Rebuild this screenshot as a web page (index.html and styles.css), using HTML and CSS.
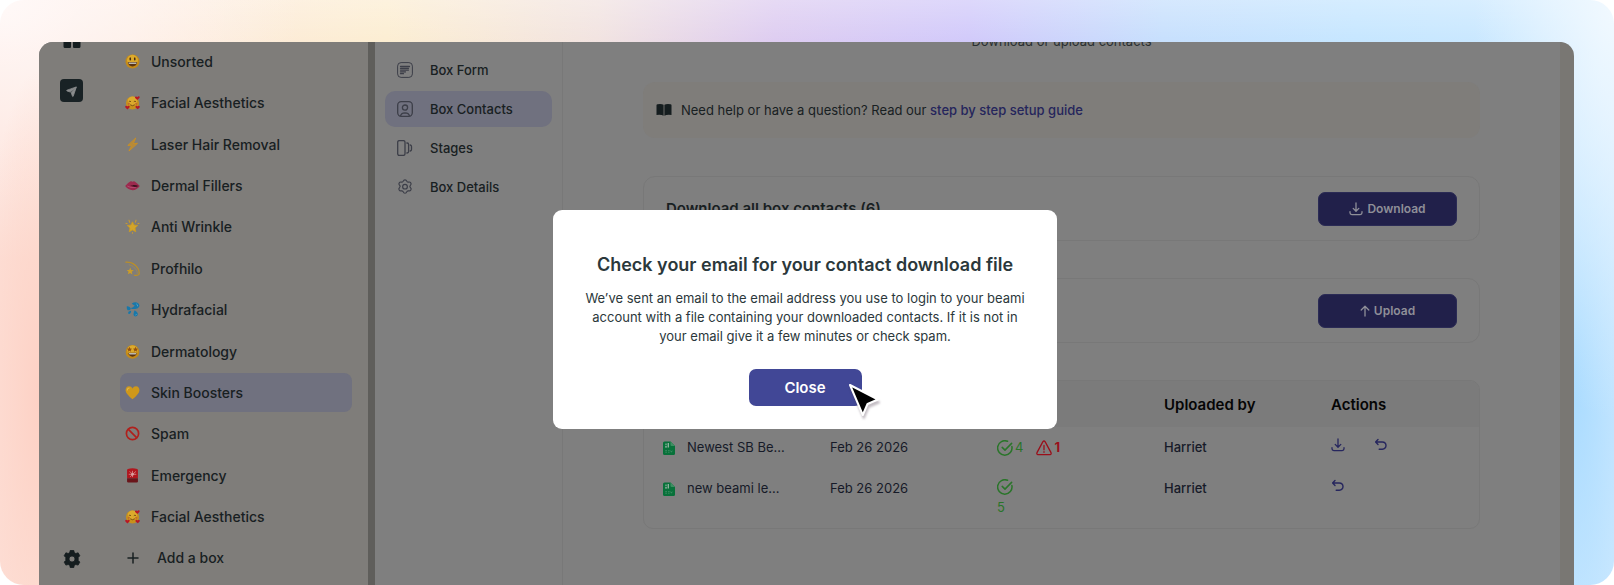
FILE: index.html
```
<!DOCTYPE html>
<html lang="en">
<head>
    <meta charset="utf-8">
    <title>Box Contacts</title>
    <link rel="stylesheet" href="styles.css">
</head>
<body>

<!-- shared icons -->
<svg class="sprite" aria-hidden="true">
    <symbol id="i-love" viewBox="0 0 16 16">
        <circle cx="8" cy="8.500" r="7" fill="#c8911c"/>
        <circle cx="8" cy="6.500" r="5" fill="#dcaa2c"/>
        <path d="M4 7.200q1.200-1.400 2.400 0M9.400 7.200q1.200-1.400 2.400 0M5.500 10.400q2.500 2 5 0" fill="none" stroke="#6b4212" stroke-width=".9"/>
        <circle cx="4" cy="9.400" r="1.200" fill="#c46a2a"/><circle cx="12" cy="9.400" r="1.200" fill="#c46a2a"/>
        <path d="M13.200 5.200l-2.400-2q-.6-1.600 1-1.700.9 0 1.400.8.500-1 1.500-.9 1.500.4.600 1.900zM2.600 15.400L.4 13.200q-.6-1.600.8-1.800.9 0 1.400.8.500-1 1.500-.8 1.400.4.600 1.900zM13.600 15.200l-2.300-2q-.4-1.500.9-1.700.8 0 1.400.8.500-.9 1.400-.7 1.200.4.600 1.700z" fill="#b81824"/>
    </symbol>
    <symbol id="i-download" viewBox="0 0 14 14">
        <path d="M7 1v8M4.200 6.400L7 9.200l2.800-2.800M1 9.600v1.200q0 1.800 1.800 1.800h8.400q1.800 0 1.800-1.800V9.600" fill="none" stroke="currentColor" stroke-width="1.300" stroke-linecap="round" stroke-linejoin="round"/>
    </symbol>
    <symbol id="i-undo" viewBox="0 0 14 14">
        <path d="M4 1.600L1.600 4 4 6.400M1.800 4h6.400q3.800.2 3.800 3.600T8.200 11.200H5.200" fill="none" stroke="currentColor" stroke-width="1.400" stroke-linecap="round" stroke-linejoin="round"/>
    </symbol>
    <symbol id="i-check" viewBox="0 0 16 16">
        <path d="M14.900 6.600A7.200 7.200 0 1 1 10.600 1.300M5.200 7.400l2.800 2.700 6.600-6.700" fill="none" stroke="currentColor" stroke-width="1.500" stroke-linecap="round" stroke-linejoin="round"/>
    </symbol>
    <symbol id="i-csv" viewBox="0 0 12 14">
        <path d="M1.500.5h6L12 5v7.500q0 1.500-1.500 1.500h-9Q0 14 0 12.500V2Q0 .5 1.500.5z" fill="#08713a"/>
        <path d="M7.500.5L12 5H8.500q-1 0-1-1z" fill="#3e8f62"/>
        <path d="M2 5.200h2v1.200H2zM4.600 2H6v4.400H4.600zM2.400 2.600h1.200v1.600H2.400z" fill="#8fb29e"/>
        <path d="M2.200 9.600H4M2.200 11.200H4M5 9.600h1.600M5 11.200h1.600M7.600 9.600l.8 1.600.8-1.600" stroke="#4d9570" stroke-width=".7" fill="none"/>
    </symbol>
    <symbol id="i-gear" viewBox="1 0.500 22 23">
        <path d="M12 1.800c1.300 0 2.100.5 2.500 1.700.4 1.100 1.200 1.700 2.500 1.400 1.400-.3 2.500-.1 3.300 1.200.8 1.200.6 2.300-.3 3.200-1.100 1.100-1.400 1.900-.7 2.900.1.300.4.500.7.800 1 .9 1.200 2 .4 3.300-.7 1.200-1.700 1.600-3 1.300-1.500-.4-2.500.2-2.900 1.500-.4 1.300-1.200 1.900-2.500 1.900s-2.100-.6-2.500-1.900c-.4-1.300-1.400-1.900-2.900-1.500-1.300.3-2.300-.1-3-1.300-.8-1.300-.6-2.400.4-3.300 1-1 1.400-1.900.7-2.900-.1-.3-.4-.5-.7-.8-.9-.9-1.100-2-.3-3.200.8-1.300 1.900-1.500 3.300-1.200 1.300.3 2.100-.3 2.500-1.400.4-1.200 1.200-1.700 2.500-1.700z" fill="none" stroke="currentColor" stroke-width="1.700"/>
        <circle cx="12" cy="11.500" r="3.400" fill="none" stroke="currentColor" stroke-width="1.700"/>
    </symbol>
</svg>

<div class="backdrop">
    <div class="app">

        <nav class="rail">
            <svg class="rail-grid" viewBox="0 0 18 18"><path d="M1.500 0h5.500q1 0 1 1v6q0 1-1 1H2Q.5 8 .5 6.500V1q0-1 1-1zM11 0h5.500q1 0 1 1v5.500Q17.500 8 16 8h-5q-1 0-1-1V1q0-1 1-1zM2 10h5q1 0 1 1v6q0 1-1 1H2q-1.500 0-1.500-1.500V11q0-1 1.500-1zM11 10h5q1.500 0 1.500 1v5.500q0 1.500-1.500 1.500h-5q-1 0-1-1v-6q0-1 1-1z" fill="#151d1f"/></svg>
            <svg class="rail-send" viewBox="0 0 23 23">
                <rect width="23" height="23" rx="4" fill="#192225"/>
                <path d="M16.400 7.900L6.900 11.200q-.5.300 0 .7l3.500 1.200 5.600-4.800-4.800 5.500 1.300 3.500q.4.500.7 0z" fill="#8a8c8d" stroke="#8a8c8d" stroke-width=".8" stroke-linejoin="round"/>
            </svg>
            <svg class="rail-gear" viewBox="0 0 18 18"><path fill-rule="evenodd" d="M7.300.3h3.400l.6 2.300 1.500.9 2.300-.7 1.700 3-1.600 1.700v2.900l1.600 1.700-1.700 3-2.300-.6-1.500.8-.6 2.400H7.300l-.6-2.400-1.500-.8-2.300.6-1.700-3 1.600-1.700V7.500L1.200 5.800l1.700-3 2.300.7 1.500-.9zM9 6a3 3 0 1 0 0 6 3 3 0 0 0 0-6z" fill="#151d1f" stroke="#151d1f" stroke-width=".8" stroke-linejoin="round"/></svg>
        </nav>

        <aside class="boxes">
            <ul class="box-list">
                <li><a href="#">
                    <svg viewBox="0 0 16 16"><circle cx="8" cy="8" r="7.500" fill="#c48a18"/><circle cx="8" cy="6.700" r="5.800" fill="#dcaa2c"/><ellipse cx="5.600" cy="5.200" rx=".9" ry="1.700" fill="#4a2c10"/><ellipse cx="10.400" cy="5.200" rx=".9" ry="1.700" fill="#4a2c10"/><path d="M3 8.600h10q-.6 4.600-5 4.700-4.400-.1-5-4.700z" fill="#5b3412"/><path d="M3.600 9h8.800q-.2 1.400-.8 1.600H4.400q-.6-.4-.8-1.600z" fill="#bcb8b0"/></svg>
                    Unsorted</a></li>
                <li><a href="#"><svg><use href="#i-love"/></svg>Facial Aesthetics</a></li>
                <li><a href="#">
                    <svg viewBox="0 0 16 16"><path d="M11.500 1L3 9l4.300-.3L4.200 15 13.400 6.700 8.800 7z" fill="#b58a3c" stroke="#c98f24" stroke-width="1" stroke-linejoin="round"/></svg>
                    Laser Hair Removal</a></li>
                <li><a href="#">
                    <svg viewBox="0 0 16 16"><path d="M.2 8.400Q3.500 5 6 3.500q1.200-.4 2 .4 1.200-.9 2.400-.3 2.600 1.800 5.400 4.800-3.200 4.200-7.600 4.600Q3.300 12.400.2 8.400z" fill="#9c2a4e"/><path d="M5.500 8q2 .4 3.400-.5 2.800-.2 5.500 1-2.800 1.600-5 .9-1.900-.3-3.900-1.400z" fill="#3b101d"/><path d="M2.500 8.600q3.500 2.400 9 1.400" fill="none" stroke="#b85578" stroke-width=".8"/></svg>
                    Dermal Fillers</a></li>
                <li><a href="#">
                    <svg viewBox="0 0 16 16"><path d="M8 3l1.600 3.400 4 .5-2.900 2.700.8 4L8 11.600l-3.500 2 .8-4-2.900-2.700 4-.5z" fill="#d3a52a" stroke="#c99a24" stroke-width=".9" stroke-linejoin="round"/><path d="M5 3.500L4.200 1.200M11 3.500l.8-2.300M8 14.400v.9M1 4.500l1.300.5M15 4.500l-1.300.5" stroke="#c99a30" stroke-width="1.100" stroke-linecap="round"/></svg>
                    Anti Wrinkle</a></li>
                <li><a href="#">
                    <svg viewBox="0 0 16 16"><path d="M1 1.200Q9 .6 13.500 7.500q2.400 4 1.300 6.800-1.600 1.500-4.800.9" fill="none" stroke="#be9024" stroke-width="1.300" stroke-linecap="round"/><path d="M4 3.800q5 1 8 5.500 1.400 2.500 1 4.400" fill="none" stroke="#a88e4c" stroke-width=".7"/><path d="M5.600 7l1 2.600 2.800.2-2.200 1.700.7 2.800-2.400-1.500-2.500 1.400.8-2.800-2-1.800 2.700-.1z" fill="#cb9c28"/></svg>
                    Profhilo</a></li>
                <li><a href="#">
                    <svg viewBox="0 0 16 16"><path d="M5.800 6.600Q9 6 10.400 3.600q-2-.4-3.200-2 2.800-1.700 5.400-1 3.300 1.400 2.700 4-1 2.700-4.400 2.900-2.800.2-5.100-.9zM2 4.500q2.700-.2 3.800 1.600.6 2-1 2.700-2 .4-2.600-1.200Q1.700 6.400 2 4.500zM10.300 8.800q3.200 1.600 3.500 4-.3 2.500-2.400 2.700-2.300-.2-2.400-2.500.2-2 1.300-4.200zM6.400 9.400q.4 2.300-1.200 3.200-1.500.5-2-.9 0-1.600 3.200-2.300z" fill="#1878aa"/><path d="M12 2q1.800.8 1.500 2.600M11.800 12.800q.5.900-.4 1.400" fill="none" stroke="#5fa5c3" stroke-width=".9"/></svg>
                    Hydrafacial</a></li>
                <li><a href="#">
                    <svg viewBox="0 0 16 16"><circle cx="8" cy="8.400" r="7.300" fill="#c48a18"/><circle cx="8" cy="6.800" r="5.600" fill="#dcaa2c"/><path d="M4.800 3l.8 1.800 1.900.2-1.400 1.300.4 1.900-1.700-1-1.700 1 .4-1.900L2.100 5l1.900-.2zM11.200 3l.8 1.800 1.900.2-1.400 1.300.4 1.900-1.700-1-1.700 1 .4-1.900L8.500 5l1.900-.2z" fill="#94500f"/><path d="M3.400 9.300h9.200q-.7 4-4.600 4.200-3.900-.2-4.600-4.200z" fill="#5b3412"/><path d="M4 9.700h8q-.2 1.200-.8 1.400H4.800q-.6-.4-.8-1.400z" fill="#bcb8b0"/></svg>
                    Dermatology</a></li>
                <li><a href="#" class="active">
                    <svg viewBox="0 0 16 16"><path d="M8 15.200Q1 9.600.6 5.800.6 1.700 4.300 1.400 7 1.500 8 3.800q1-2.300 3.700-2.400 3.700.3 3.700 4.400Q15 9.600 8 15.200z" fill="#cf981a"/><path d="M2.400 5.400q.2-2 2-2.200" fill="none" stroke="#deb650" stroke-width="1.200" stroke-linecap="round"/></svg>
                    Skin Boosters</a></li>
                <li><a href="#">
                    <svg viewBox="0 0 16 16"><circle cx="8" cy="8" r="6.500" fill="none" stroke="#b0201c" stroke-width="1.800"/><path d="M3.600 3.600l8.800 8.800" stroke="#b0201c" stroke-width="1.800"/></svg>
                    Spam</a></li>
                <li><a href="#">
                    <svg viewBox="0 0 16 16"><path d="M3 1Q8-.3 13 1q.8.400.8 1.500V11H2.200V2.500Q2.200 1.400 3 1z" fill="#b0161e"/><path d="M2.200 11h11.600v3.300q0 1.200-1.400 1.200H3.600q-1.400 0-1.400-1.200z" fill="#6a151a"/><path d="M8 6.700L5 3.600M8 6.700l3.600-3M8 6.700H4M8 6.700h4M8 6.700L5.500 9.500M8 6.700V3M8 6.700v3" stroke="#d48a8a" stroke-width=".9"/><circle cx="8" cy="6.700" r="1.500" fill="#d9a0a0"/></svg>
                    Emergency</a></li>
                <li><a href="#"><svg><use href="#i-love"/></svg>Facial Aesthetics</a></li>
            </ul>
            <button type="button" class="add-box">
                <svg viewBox="0 0 12 12"><path d="M6 1v10M1 6h10" stroke="currentColor" stroke-width="1.500" stroke-linecap="round"/></svg>
                Add a box
            </button>
        </aside>

        <nav class="tabs">
            <a href="#">
                <svg viewBox="0 0 16 16"><rect x=".6" y=".6" width="14.800" height="14.800" rx="3.500" fill="none" stroke="currentColor"/><path d="M3.500 4.500h9M3.500 6.300h8M3.500 8.100h8M3.500 9.900h5M3.500 11.700h3" stroke="currentColor" stroke-width="1.300" stroke-linecap="round"/></svg>
                Box Form</a>
            <a href="#" class="active">
                <svg viewBox="0 0 16 16"><rect x=".7" y=".7" width="14.600" height="14.600" rx="3.500" fill="none" stroke="currentColor" stroke-width="1.300"/><circle cx="8" cy="6.600" r="2.600" fill="none" stroke="currentColor" stroke-width="1.300"/><path d="M3.600 15q.3-3 4.400-3.200 4.100.2 4.400 3.200" fill="none" stroke="currentColor" stroke-width="1.300"/></svg>
                Box Contacts</a>
            <a href="#">
                <svg viewBox="0 0 16 16"><rect x=".7" y=".6" width="7.300" height="14.800" rx="1.600" fill="none" stroke="currentColor" stroke-width="1.300"/><path d="M9.400 3h.8q1.400 0 1.400 1.400v7.200q0 1.400-1.400 1.400h-.8M12.800 5h.4q1.300.2 1.300 1.400v3.200q0 1.200-1.300 1.400h-.4" fill="none" stroke="currentColor" stroke-width="1.300"/></svg>
                Stages</a>
            <a href="#">
                <svg><use href="#i-gear"/></svg>
                Box Details</a>
        </nav>

        <main class="content">
            <p class="lead">Download or upload contacts</p>

            <div class="help">
                <svg viewBox="0 0 16 12"><path d="M1.500.3Q5.500-.3 7.600.8v10.900Q5 10.200.5 10.900V1.300Q.5.500 1.500.3zM14.500.3Q10.500-.3 8.400.8v10.900q2.600-1.500 7.100-.8V1.300q0-.8-1-1z" fill="#151d1f"/></svg>
                <p>Need help or have a question? Read our <a href="#">step by step setup guide</a></p>
            </div>

            <section class="card">
                <h2>Download all box contacts (6)</h2>
                <button type="button" class="btn"><svg><use href="#i-download"/></svg>Download</button>
            </section>

            <section class="card">
                <button type="button" class="btn"><svg class="arrow" viewBox="0 0 10 12"><path d="M5 11V1.500M1.200 5L5 1.200 8.800 5" fill="none" stroke="currentColor" stroke-width="1.300" stroke-linecap="round" stroke-linejoin="round"/></svg>Upload</button>
            </section>

            <div class="files">
                <table>
                    <thead>
                        <tr><th></th><th></th><th></th><th>Uploaded by</th><th>Actions</th></tr>
                    </thead>
                    <tbody>
                        <tr>
                            <td><span class="file"><svg><use href="#i-csv"/></svg>Newest SB Be...</span></td>
                            <td>Feb 26 2026</td>
                            <td>
                                <div class="status">
                                    <span class="ok"><svg><use href="#i-check"/></svg>4</span>
                                    <span class="fail"><svg viewBox="0 0 16 16"><path d="M6.900 1.600q1.100-1.200 2.200 0l5.900 11q.6 1.700-1.100 2.100H2.100Q.4 14.300 1 12.600z" fill="none" stroke="currentColor" stroke-width="1.300"/><path d="M8 5.500v4.300M8 11.700v.6" stroke="currentColor" stroke-width="1.300" stroke-linecap="round"/></svg>1</span>
                                </div>
                            </td>
                            <td class="who">Harriet</td>
                            <td>
                                <div class="actions">
                                    <button type="button" aria-label="Download"><svg><use href="#i-download"/></svg></button>
                                    <button type="button" aria-label="Undo"><svg><use href="#i-undo"/></svg></button>
                                </div>
                            </td>
                        </tr>
                        <tr>
                            <td><span class="file"><svg><use href="#i-csv"/></svg>new beami le...</span></td>
                            <td>Feb 26 2026</td>
                            <td><div class="status wrap"><svg class="ok"><use href="#i-check"/></svg><span class="ok">5</span></div></td>
                            <td class="who">Harriet</td>
                            <td>
                                <div class="actions">
                                    <button type="button" aria-label="Undo"><svg><use href="#i-undo"/></svg></button>
                                </div>
                            </td>
                        </tr>
                    </tbody>
                </table>
            </div>
        </main>

        <div class="overlay">
            <div class="modal" role="dialog" aria-labelledby="modal-title">
                <h1 id="modal-title">Check your email for your contact download file</h1>
                <p>We’ve sent an email to the email address you use to login to your beami account with a file containing your downloaded contacts. If it is not in your email give it a few minutes or check spam.</p>
                <div class="close-wrap">
                    <button type="button" class="close">Close</button>
                    <svg class="cursor" viewBox="0 0 36 40"><path d="M3 3L31 17.500 20.500 22 15.800 33z" fill="#000" stroke="#fff" stroke-width="2" stroke-linejoin="round"/></svg>
                </div>
            </div>
        </div>

    </div>
</div>

</body>
</html>
```
FILE: styles.css
```
* { box-sizing: border-box; }
body {
    margin: 0;
    background: #fff;
    font-family: Inter, "Liberation Sans", sans-serif;
    font-size: 14px;
    line-height: 19px;
    color: #182022;
}
h1, h2, p, ul { margin: 0; padding: 0; }
a { color: inherit; text-decoration: none; }
button { font: inherit; color: inherit; border: 0; padding: 0; background: none; }
svg { flex: none; display: block; }
.sprite { position: absolute; width: 0; height: 0; }

.backdrop {
    height: 100vh;
    padding: 42px 40px 0 39px;
    border-radius: 24px;
    overflow: hidden;
    background:
        radial-gradient(ellipse 140px 420px at 100% 0, #f1f9ff, rgba(241, 249, 255, 0)),
        radial-gradient(ellipse 60px 330px at 1574px 370px, #a9dbff, rgba(169, 219, 255, 0)),
        radial-gradient(ellipse 60px 330px at 39px 400px, #fdd1c5, rgba(253, 209, 197, 0)),
        radial-gradient(ellipse 300px 260px at 0 0, #fff9f8, rgba(255, 249, 248, 0)),
        linear-gradient(rgba(255, 255, 255, .3), rgba(255, 255, 255, 0) 50px),
        linear-gradient(90deg, #fddfd6, #fde7da 8%, #fcedd0 24%, #f1e2df 37%, #dccaf0 48%, #cfc7fa 60%, #c4defd 72%, #c3e5ff 84%, #cae8ff);
}
.app {
    position: relative;
    display: flex;
    height: 100%;
    overflow: hidden;
    border-radius: 14px 14px 0 0;
    background: #7f7f7f;
    border-right: 14px solid #797773;
}

.rail {
    display: flex;
    flex-direction: column;
    align-items: center;
    width: 65px;
    padding-bottom: 17px;
    background: #7f7d7a;
}
.rail-grid { width: 18px; height: 18px; margin-top: -12px; }
.rail-send { width: 23px; height: 23px; margin-top: 31px; }
.rail-gear { width: 18px; height: 18px; margin-top: auto; }

.boxes {
    display: flex;
    flex-direction: column;
    width: 271px;
    padding: 0 16px 8px;
    background: #7f7d7a;
    border-right: 7px solid #5f5e5b;
    font-weight: 500;
}
.box-list {
    flex: 1;
    display: flex;
    flex-direction: column;
    justify-content: space-between;
    padding-bottom: 2px;
    list-style: none;
}
.box-list a, .add-box {
    display: flex;
    align-items: center;
    gap: 11px;
    height: 39px;
    padding: 0 5px;
    border-radius: 8px;
}
.box-list svg { width: 15px; height: 15px; }
.active { background: #70717f; }
.add-box { gap: 18px; padding-left: 7px; font-weight: 500; }
.add-box svg { width: 12px; height: 12px; }

.tabs {
    display: flex;
    flex-direction: column;
    gap: 3px;
    width: 188px;
    padding: 10px;
    border-right: 1px solid #787878;
    font-size: 13px;
    font-weight: 500;
}
.tabs a {
    display: flex;
    align-items: center;
    gap: 17px;
    height: 36px;
    padding: 0 12px;
    border-radius: 10px;
}
.tabs svg { width: 16px; height: 16px; color: #3c3e48; }

.content { flex: 1; padding: 0 80px; }
.lead { margin-top: -10px; text-align: center; font-size: 13px; color: #2a3032; }
.help {
    display: flex;
    align-items: center;
    gap: 9px;
    height: 56px;
    margin: 31px 0 38px;
    padding: 0 13px;
    border-radius: 12px;
    background: #7f7d7a;
    font-size: 13px;
}
.help svg { width: 16px; height: 12px; }
.help a { color: #25255c; font-weight: 500; }

.card {
    display: flex;
    align-items: center;
    height: 65px;
    margin-bottom: 37px;
    padding: 0 22px;
    border: 1px solid #787878;
    border-radius: 12px;
}
.card h2 { font-size: 15px; font-weight: 600; }
.btn {
    display: flex;
    align-items: center;
    justify-content: center;
    gap: 4px;
    width: 139px;
    height: 34px;
    margin-left: auto;
    border: 1px solid #2b2b55;
    border-radius: 7px;
    background: #21204a;
    color: #8f8f98;
    font-size: 12px;
    font-weight: 600;
}
.btn svg { width: 14px; height: 14px; }
.btn .arrow { width: 10px; height: 12px; }

.files { border: 1px solid #787878; border-radius: 10px; overflow: hidden; }
table { width: 100%; border-collapse: collapse; table-layout: fixed; }
th, td { text-align: left; padding: 0 19px; }
th { height: 46px; background: #7b7b7b; color: #050505; font-size: 15px; font-weight: 600; }
td { padding-top: 11px; padding-bottom: 11px; vertical-align: top; font-size: 13px; color: #161a28; }
.who { font-weight: 500; }
.file { display: flex; align-items: center; gap: 12px; }
.file svg { width: 12px; height: 14px; }
.status { display: flex; gap: 13px; }
.status span { display: flex; align-items: center; gap: 2px; }
.status svg { width: 16px; height: 16px; }
.status.wrap { flex-direction: column; gap: 3px; }
.ok { color: #2a752a; }
.fail { color: #9a0f1a; font-weight: 700; }
.actions { display: flex; gap: 29px; color: #26265e; }
.actions svg { width: 14px; height: 14px; }

.overlay {
    position: absolute;
    inset: 0 -14px 0 0;
    display: flex;
    align-items: center;
    justify-content: center;
    padding: 11px 3px 0 0;
}
.modal {
    width: 504px;
    padding: 43px 32px 23px;
    border-radius: 9px;
    background: #fff;
    color: #2b383b;
    text-align: center;
}
.modal h1 { margin-bottom: 12px; font-size: 18px; line-height: 24px; font-weight: 600; }
.modal p { margin-bottom: 23px; font-size: 13px; }
.close-wrap { position: relative; width: 113px; margin: 0 auto; }
.close {
    display: block;
    width: 100%;
    height: 37px;
    border-radius: 7px;
    background: #414796;
    color: #fff;
    font-size: 15px;
    font-weight: 600;
}
.cursor {
    position: absolute;
    left: 98px;
    top: 13px;
    width: 36px;
    height: 40px;
    filter: drop-shadow(1px 3px 1px rgba(60, 40, 60, .3));
}
```
